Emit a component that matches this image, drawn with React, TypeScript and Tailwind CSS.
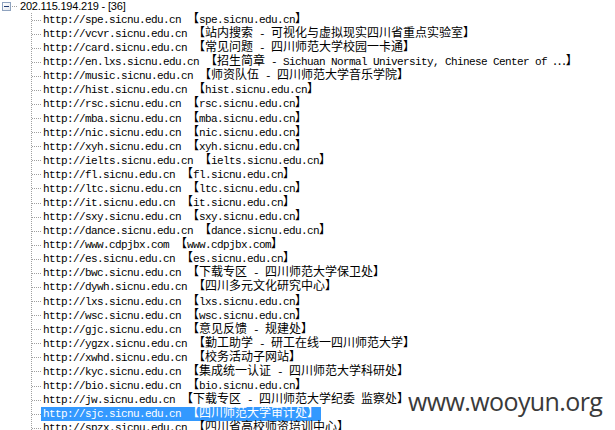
import React from "react"

const rows: [string, string][] = [
  ["http://spe.sicnu.edu.cn", "spe.sicnu.edu.cn"],
  ["http://vcvr.sicnu.edu.cn", "站内搜索 - 可视化与虚拟现实四川省重点实验室"],
  ["http://card.sicnu.edu.cn", "常见问题 - 四川师范大学校园一卡通"],
  ["http://en.lxs.sicnu.edu.cn", "招生简章 - Sichuan Normal University, Chinese Center of …"],
  ["http://music.sicnu.edu.cn", "师资队伍 - 四川师范大学音乐学院"],
  ["http://hist.sicnu.edu.cn", "hist.sicnu.edu.cn"],
  ["http://rsc.sicnu.edu.cn", "rsc.sicnu.edu.cn"],
  ["http://mba.sicnu.edu.cn", "mba.sicnu.edu.cn"],
  ["http://nic.sicnu.edu.cn", "nic.sicnu.edu.cn"],
  ["http://xyh.sicnu.edu.cn", "xyh.sicnu.edu.cn"],
  ["http://ielts.sicnu.edu.cn", "ielts.sicnu.edu.cn"],
  ["http://fl.sicnu.edu.cn", "fl.sicnu.edu.cn"],
  ["http://ltc.sicnu.edu.cn", "ltc.sicnu.edu.cn"],
  ["http://it.sicnu.edu.cn", "it.sicnu.edu.cn"],
  ["http://sxy.sicnu.edu.cn", "sxy.sicnu.edu.cn"],
  ["http://dance.sicnu.edu.cn", "dance.sicnu.edu.cn"],
  ["http://www.cdpjbx.com", "www.cdpjbx.com"],
  ["http://es.sicnu.edu.cn", "es.sicnu.edu.cn"],
  ["http://bwc.sicnu.edu.cn", "下载专区 - 四川师范大学保卫处"],
  ["http://dywh.sicnu.edu.cn", "四川多元文化研究中心"],
  ["http://lxs.sicnu.edu.cn", "lxs.sicnu.edu.cn"],
  ["http://wsc.sicnu.edu.cn", "wsc.sicnu.edu.cn"],
  ["http://gjc.sicnu.edu.cn", "意见反馈 - 规建处"],
  ["http://ygzx.sicnu.edu.cn", "勤工助学 - 研工在线一四川师范大学"],
  ["http://xwhd.sicnu.edu.cn", "校务活动子网站"],
  ["http://kyc.sicnu.edu.cn", "集成统一认证 - 四川师范大学科研处"],
  ["http://bio.sicnu.edu.cn", "bio.sicnu.edu.cn"],
  ["http://jw.sicnu.edu.cn", "下载专区 - 四川师范大学纪委 监察处"],
  ["http://sjc.sicnu.edu.cn", "四川师范大学审计处"],
  ["http://spzx.sicnu.edu.cn", "四川省高校师资培训中心"],
]

// SimSun-style mix: half-width ascii at 6px, CJK at 12px
function MixedText({ text }: { text: string }) {
  const parts: { cjk: boolean; s: string }[] = []
  for (const ch of text) {
    const cjk = ch.charCodeAt(0) > 0x2000
    const last = parts[parts.length - 1]
    if (last && last.cjk === cjk) last.s += ch
    else parts.push({ cjk, s: ch })
  }
  return (
    <>
      {parts.map((p, i) =>
        p.cjk ? (
          <span key={i} className="font-['Noto_Sans_CJK_SC'] text-[12px] leading-[10px] tracking-[0]">
            {p.s}
          </span>
        ) : (
          <span key={i}>{p.s}</span>
        )
      )}
    </>
  )
}

export default function App() {
  return (
    <div className="relative w-[615px] h-[430px] overflow-hidden bg-white text-black">
      {/* Root node */}
      <div className="flex items-center h-[13px]">
        <span className="ml-[2px] w-[9px] h-[9px] border border-[#8fa3bf] bg-gradient-to-br from-white to-[#e4e8ee] flex items-center justify-center shrink-0">
          <span className="w-[5px] h-px bg-[#1f3a70]" />
        </span>
        <span className="w-[6px] h-px mx-px bg-[repeating-linear-gradient(to_right,#a0a0a0_0_1px,transparent_1px_2px)]" />
        <span className="ml-px font-['Liberation_Sans'] text-[11px] tracking-[-0.2px] leading-[15px] whitespace-nowrap">
          202.115.194.219 - [36]
        </span>
      </div>

      {/* Children */}
      <div className="flex">
        <div className="w-[31px] shrink-0" />
        <div className="flex flex-col w-px shrink-0 bg-[repeating-linear-gradient(to_bottom,#a0a0a0_0_1px,transparent_1px_2px)]" />
        <div className="flex flex-col">
          {rows.map(([url, title], i) => {
            const selected = url === "http://sjc.sicnu.edu.cn"
            return (
              <div key={i} className="flex items-center h-[14.08px]">
                <span className="w-[9px] h-px shrink-0 bg-[repeating-linear-gradient(to_right,#a0a0a0_0_1px,transparent_1px_2px)]" />
                <span
                  className={
                    "px-[2px] h-[14.08px] whitespace-nowrap font-['Liberation_Mono'] text-[11px] leading-[14.08px] tracking-[-0.6px] " +
                    (selected ? "bg-[#3399ff] text-white" : "")
                  }
                >
                  <MixedText text={`${url} 【${title}】`} />
                </span>
              </div>
            )
          })}
        </div>
      </div>

      {/* Watermark */}
      <div className="absolute left-[408px] top-[386px] font-['Open_Sans'] text-[25px] leading-[30px] tracking-[-0.6px] text-[#3a3a3a]">
        www.wooyun.org
      </div>
    </div>
  )
}
